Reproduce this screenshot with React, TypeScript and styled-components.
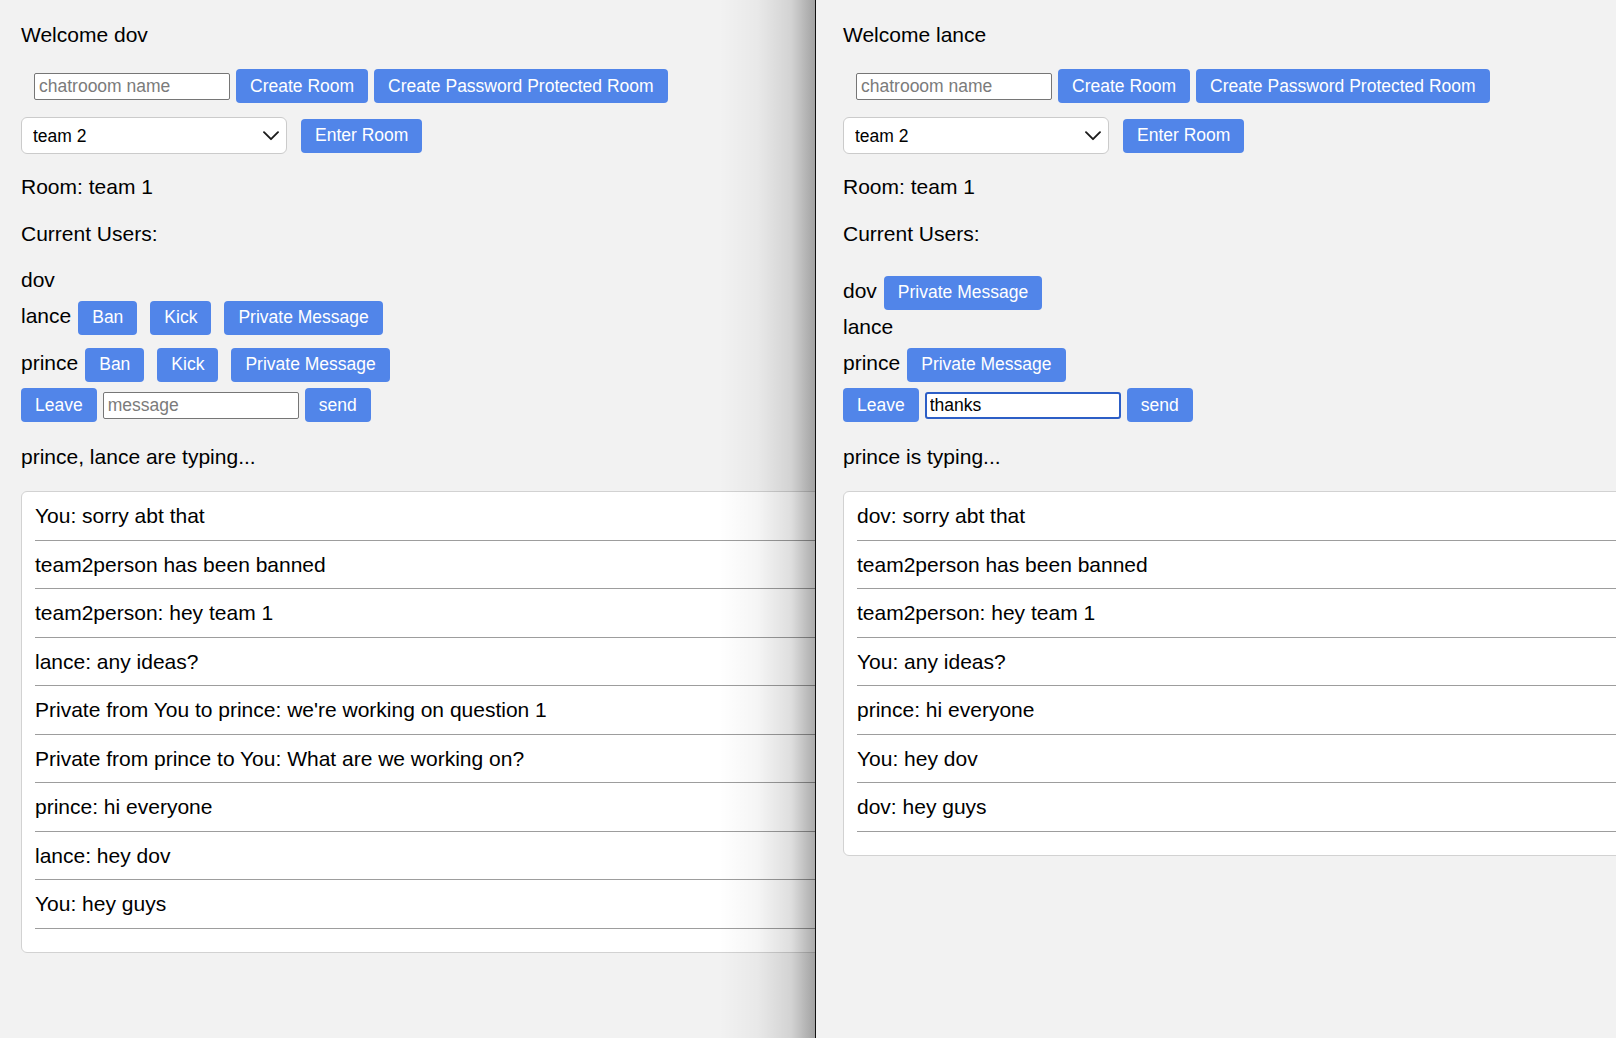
import React from "react";
import styled, { createGlobalStyle, css } from "styled-components";

const GlobalStyle = createGlobalStyle`
  html, body {
    margin: 0;
    padding: 0;
    background: #f2f2f2;
  }
  body {
    font-family: "Liberation Sans", Arial, Helvetica, sans-serif;
    color: #000;
  }
`;

const FONT = `"Liberation Sans", Arial, Helvetica, sans-serif`;

const Screen = styled.div`
  display: flex;
  width: 1616px;
  height: 1038px;
  overflow: hidden;
  background: #f2f2f2;
`;

const Panel = styled.section<{ $pad: number; $width?: number }>`
  position: relative;
  box-sizing: border-box;
  ${(p) =>
    p.$width
      ? css`
          flex: 0 0 ${p.$width}px;
          width: ${p.$width}px;
        `
      : css`
          flex: 1 1 auto;
          min-width: 0;
        `}
  height: 100%;
  overflow: hidden;
  padding: 23px 0 0 ${(p) => p.$pad}px;
  display: flex;
  flex-direction: column;
  align-items: flex-start;
`;

const Shade = styled.div`
  position: absolute;
  top: 0;
  right: 0;
  bottom: 0;
  width: 96px;
  pointer-events: none;
  background: linear-gradient(
    to right,
    rgba(0, 0, 0, 0) 0%,
    rgba(0, 0, 0, 0.04) 40%,
    rgba(0, 0, 0, 0.13) 75%,
    rgba(0, 0, 0, 0.33) 100%
  );
`;

const Divider = styled.div`
  flex: 0 0 1px;
  width: 1px;
  background: #111;
`;

const Line = styled.div<{ $mt?: number }>`
  font-size: 21px;
  line-height: 24px;
  margin-top: ${(p) => p.$mt ?? 0}px;
  white-space: nowrap;
`;

const Row = styled.div<{ $mt?: number; $indent?: number; $gap?: number }>`
  display: flex;
  align-items: center;
  margin-top: ${(p) => p.$mt ?? 0}px;
  padding-left: ${(p) => p.$indent ?? 0}px;
  gap: ${(p) => p.$gap ?? 0}px;
`;

const TextInput = styled.input<{ $focused?: boolean }>`
  box-sizing: border-box;
  width: 196px;
  height: 27px;
  padding: 0 4px;
  border: 1px solid #767676;
  border-radius: 2px;
  background: #fff;
  font-family: ${FONT};
  font-size: 17.5px;
  color: #000;
  outline: none;
  &::placeholder {
    color: #7b7b7b;
  }
  ${(p) =>
    p.$focused &&
    css`
      border: 2px solid #2c5ec6;
      border-radius: 3px;
      padding: 0 3px;
    `}
`;

const Button = styled.button`
  flex-shrink: 0;
  height: 34px;
  padding: 0 14px;
  border: none;
  border-radius: 4px;
  background: #5185e9;
  color: #fff;
  font-family: ${FONT};
  font-size: 17.5px;
  white-space: nowrap;
  cursor: pointer;
`;

const SelectWrap = styled.div`
  position: relative;
  width: 266px;
  height: 37px;
  margin-right: 14px;
`;

const RoomSelect = styled.select`
  appearance: none;
  -webkit-appearance: none;
  box-sizing: border-box;
  width: 100%;
  height: 100%;
  padding: 0 0 0 11px;
  border: 1px solid #cbcbcb;
  border-radius: 6px;
  background: #fff;
  font-family: ${FONT};
  font-size: 17.5px;
  color: #000;
  outline: none;
`;

const Chevron = styled.svg`
  position: absolute;
  right: 8px;
  top: 50%;
  transform: translateY(-50%);
  width: 16px;
  height: 10px;
  pointer-events: none;
`;

const UserList = styled.div`
  display: flex;
  flex-direction: column;
  margin-top: 23px;
`;

const UserRow = styled.div<{ $hasActions: boolean }>`
  display: flex;
  align-items: center;
  height: ${(p) => (p.$hasActions ? 47 : 25)}px;
`;

const UserName = styled.span`
  font-size: 21px;
  line-height: 24px;
  margin-right: 7px;
  padding-bottom: 4px;
`;

const ActionButton = styled(Button)`
  & + & {
    margin-left: 13px;
  }
`;

const ChatBox = styled.div`
  flex-shrink: 0;
  box-sizing: border-box;
  width: 1000px;
  margin-top: 22px;
  padding: 0 0 23px 13px;
  background: #fff;
  border: 1px solid #d2d2d2;
  border-radius: 6px;
`;

const Message = styled.div`
  font-size: 21px;
  line-height: 24px;
  padding: 12px 0 11.5px;
  border-bottom: 1px solid #9d9d9d;
  white-space: nowrap;
`;

type User = { name: string; actions: string[] };

type Session = {
  me: string;
  pad: number;
  width?: number;
  draft: string;
  typing: string;
  users: User[];
  messages: string[];
};

const ALL = ["Ban", "Kick", "Private Message"];

const sessions: Session[] = [
  {
    me: "dov",
    pad: 21,
    width: 815,
    draft: "",
    typing: "prince, lance are typing...",
    users: [
      { name: "dov", actions: [] },
      { name: "lance", actions: ALL },
      { name: "prince", actions: ALL },
    ],
    messages: [
      "You: sorry abt that",
      "team2person has been banned",
      "team2person: hey team 1",
      "lance: any ideas?",
      "Private from You to prince: we're working on question 1",
      "Private from prince to You: What are we working on?",
      "prince: hi everyone",
      "lance: hey dov",
      "You: hey guys",
    ],
  },
  {
    me: "lance",
    pad: 27,
    draft: "thanks",
    typing: "prince is typing...",
    users: [
      { name: "dov", actions: ["Private Message"] },
      { name: "lance", actions: [] },
      { name: "prince", actions: ["Private Message"] },
    ],
    messages: [
      "dov: sorry abt that",
      "team2person has been banned",
      "team2person: hey team 1",
      "You: any ideas?",
      "prince: hi everyone",
      "You: hey dov",
      "dov: hey guys",
    ],
  },
];

function ChatWindow({ s, shaded }: { s: Session; shaded?: boolean }) {
  return (
    <Panel $pad={s.pad} $width={s.width}>
      <Line>Welcome {s.me}</Line>
      <Row $mt={22} $indent={13} $gap={6}>
        <TextInput placeholder="chatrooom name" />
        <Button>Create Room</Button>
        <Button>Create Password Protected Room</Button>
      </Row>
      <Row $mt={14}>
        <SelectWrap>
          <RoomSelect defaultValue="team 2">
            <option value="team 1">team 1</option>
            <option value="team 2">team 2</option>
          </RoomSelect>
          <Chevron viewBox="0 0 16 10" fill="none">
            <path
              d="M1 1.2 L8 8.2 L15 1.2"
              stroke="#1c1c1c"
              strokeWidth="1.9"
              strokeLinecap="round"
              strokeLinejoin="round"
            />
          </Chevron>
        </SelectWrap>
        <Button>Enter Room</Button>
      </Row>
      <Line $mt={21}>Room: team 1</Line>
      <Line $mt={23}>Current Users:</Line>
      <UserList>
        {s.users.map((u) => (
          <UserRow key={u.name} $hasActions={u.actions.length > 0}>
            <UserName>{u.name}</UserName>
            {u.actions.map((a) => (
              <ActionButton key={a}>{a}</ActionButton>
            ))}
          </UserRow>
        ))}
      </UserList>
      <Row $gap={6}>
        <Button>Leave</Button>
        <TextInput
          placeholder="message"
          defaultValue={s.draft}
          $focused={s.draft.length > 0}
        />
        <Button>send</Button>
      </Row>
      <Line $mt={23}>{s.typing}</Line>
      <ChatBox>
        {s.messages.map((m, i) => (
          <Message key={i}>{m}</Message>
        ))}
      </ChatBox>
      {shaded && <Shade />}
    </Panel>
  );
}

export default function App() {
  return (
    <>
      <GlobalStyle />
      <Screen>
        <ChatWindow s={sessions[0]} shaded />
        <Divider />
        <ChatWindow s={sessions[1]} />
      </Screen>
    </>
  );
}
